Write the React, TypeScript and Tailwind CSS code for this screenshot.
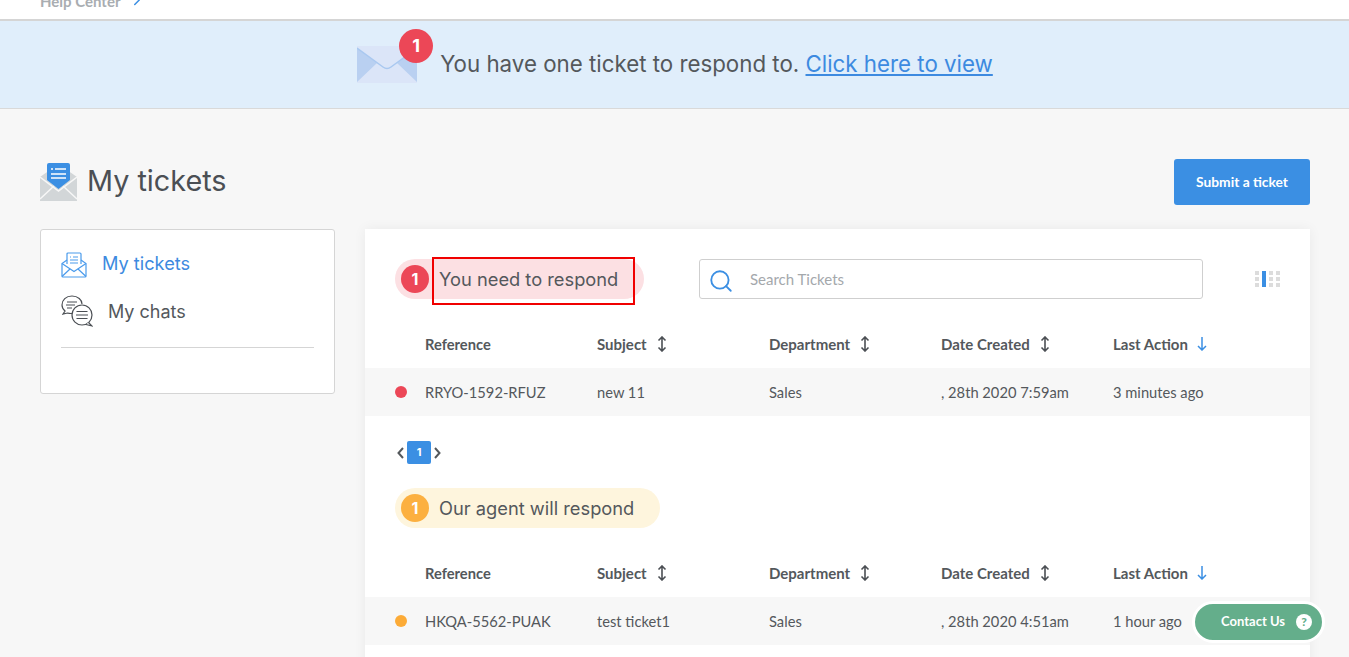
import { ChevronRight, Search } from "lucide-react";

const columns = ["Subject", "Department", "Date Created"];

function SortArrows() {
  return (
    <svg width="10" height="16" viewBox="0 0 10 16" fill="none" stroke="#4b4f54" strokeWidth="1.6">
      <path d="M5 1v14M1.500 4.500L5 1l3.500 3.500M1.500 11.500L5 15l3.500-3.500" />
    </svg>
  );
}

function SortDown() {
  return (
    <svg width="10" height="14" viewBox="0 0 10 14" fill="none" stroke="#3b8fe3" strokeWidth="1.500">
      <path d="M5 0v13M1 9l4 4 4-4" />
    </svg>
  );
}

function PageChevron({ dir }: { dir: "left" | "right" }) {
  return (
    <svg width="7" height="12" viewBox="0 0 7 12" fill="none" stroke="#54585c" strokeWidth="2">
      <path d={dir === "left" ? "M6 1L1.500 6 6 11" : "M1 1l4.500 5L1 11"} />
    </svg>
  );
}

function EnvelopeLight() {
  return (
    <svg width="60" height="37" viewBox="0 0 60 37" className="absolute left-0 top-0">
      <rect width="60" height="37" fill="#dbe5f8" />
      <path d="M0 2l20 15L0 36zM60 2L40 17l20 19z" fill="#b9d0f1" />
      <path d="M0 2l26 19q4 3 8 0L60 2" fill="none" stroke="#a9c8f0" strokeWidth="1.500" />
    </svg>
  );
}

function TitleIcon() {
  return (
    <svg width="37" height="38" viewBox="0 0 37 38">
      <path d="M0 14l18.500-13L37 14v24H0z" fill="#d2d6d8" />
      <path d="M0 36l14-13M37 36L23 23M0 14l18.500 14L37 14" stroke="#f7f7f7" strokeWidth="1.500" fill="none" />
      <path d="M7 2q0-2 2-2h19q2 0 2 2v15l-11.500 9L7 17z" fill="#3b8fe3" />
      <path d="M11 6h2M15 6h11M11 11h15M11 15h15" stroke="#fff" strokeWidth="1.300" />
    </svg>
  );
}

function NavTicketIcon() {
  return (
    <svg width="26" height="26" viewBox="0 0 26 26" fill="none" stroke="#4a9bec" strokeWidth="1.200">
      <path d="M6 12V2q0-1 1-1h12q1 0 1 1v10" />
      <path d="M9 5h1M12 5h5M9 8h8M9 11h8" />
      <path d="M6 8l-5 3.500V24q0 1 1 1h22q1 0 1-1V11.500L20 8" />
      <path d="M1 11.500l12 8 12-8M1 24.500l8.500-8M25 24.500l-8.500-8" />
    </svg>
  );
}

function NavChatIcon() {
  return (
    <svg width="32" height="32" viewBox="0 0 32 32" fill="none" stroke="#4b4f54" strokeWidth="1.200">
      <path d="M11 18.500H10q-2 0-3.500-.5L2 19l2-3Q1 13.500 1 10c0-5 4-9 10-9s10 4 10 8" />
      <path d="M6 7h10M5 10h9M6 13h5" />
      <circle cx="21" cy="20" r="10" fill="#fff" />
      <path d="M27.500 27.500L31 31l-6-1.500" fill="#fff" />
      <path d="M15.500 16.500h11M15 20h12M15.500 23.500h11" />
    </svg>
  );
}

function LayoutIcon() {
  const cell = "bg-[#dcdcdc]";
  return (
    <div className="grid h-4 w-[25px] grid-cols-4 grid-rows-3 gap-x-[3px] gap-y-[2px]">
      <span className={cell} />
      <span className="row-span-3 bg-[#3b8fe3]" />
      <span className={cell} />
      <span className={cell} />
      <span className={cell} />
      <span className={cell} />
      <span className={cell} />
      <span className={cell} />
      <span className={cell} />
      <span className={cell} />
    </div>
  );
}

function TableBlock({ dot, reference, subject, created, last }: { dot: string; reference: string; subject: string; created: string; last: string }) {
  return (
    <div className="font-['Lato',sans-serif] text-[#54585c]">
      <div className="grid h-[48px] grid-cols-[232px_172px_172px_172px_1fr] items-center text-[15px] font-bold">
        <span className="pl-[60px] text-[14.700px]">Reference</span>
        {columns.map((col) => (
          <span key={col} className="flex items-center gap-[10px]">
            {col}
            <SortArrows />
          </span>
        ))}
        <span className="flex items-center gap-[9px]">
          Last Action
          <SortDown />
        </span>
      </div>
      <div className="grid h-[48px] grid-cols-[232px_172px_172px_172px_1fr] items-center bg-[#f7f7f7] pt-[1px] text-[14.700px]">
        <span className="flex items-center pl-[30px]">
          <span className={`h-3 w-3 rounded-full ${dot}`} />
          <span className="ml-[18px]">{reference}</span>
        </span>
        <span>{subject}</span>
        <span>Sales</span>
        <span>{created}</span>
        <span>{last}</span>
      </div>
    </div>
  );
}

export default function App() {
  return (
    <div className="relative h-[657px] overflow-hidden bg-[#f7f7f7] font-['Inter',sans-serif]">
      <div className="flex h-[21px] items-end overflow-hidden border-b-2 border-[#d5d5d5] bg-white pb-[10px] pl-10 font-['Lato',sans-serif] text-[15px] font-bold text-[#a9adb1]">
        <span className="leading-none">Help Center</span>
        <ChevronRight size={18} className="ml-2 text-[#3b8fe3]" />
      </div>

      <div className="flex h-[88px] items-center justify-center border-b border-[#d9d9d9] bg-[#e0eefb] pl-[1px]">
        <div className="relative mr-[23px] h-[37px] w-[60px]">
          <EnvelopeLight />
          <span className="absolute left-[42px] top-[-17px] flex h-[34px] w-[34px] items-center justify-center rounded-full bg-[#ec4757] text-lg font-bold text-white">
            1
          </span>
        </div>
        <p className="mb-[2px] text-[22.300px] text-[#54585c]">
          You have one ticket to respond to.{" "}
          <span className="text-[#3d8ae0] underline">Click here to view</span>
        </p>
      </div>

      <div className="mt-[50px] flex h-[46px] items-center justify-between pl-10 pr-[39px]">
        <div className="flex items-center gap-[10px]">
          <TitleIcon />
          <h1 className="mb-[2px] text-[28.800px] text-[#4b4f54]">My tickets</h1>
        </div>
        <button className="h-[46px] w-[136px] rounded-[3px] bg-[#3b8fe3] font-['Lato',sans-serif] text-[13.800px] font-bold text-white">
          Submit a ticket
        </button>
      </div>

      <div className="mt-6 flex items-start gap-[30px] pl-10 pr-[39px]">
        <aside className="h-[165px] w-[295px] rounded-[3px] border border-[#d5d5d5] bg-white px-5 pt-5">
          <div className="flex items-center gap-[15px] text-[18.200px] text-[#3d8ae0]">
            <NavTicketIcon />
            <span className="mb-[2px]">My tickets</span>
          </div>
          <div className="mt-4 flex items-center gap-[15px] text-[18px] text-[#54585c]">
            <NavChatIcon />
            <span>My chats</span>
          </div>
          <div className="mt-5 border-t border-[#d5d5d5]" />
        </aside>

        <main className="h-[500px] flex-1 bg-white shadow-[0_0_12px_rgba(0,0,0,0.06)]">
          <div className="flex items-center pl-[30px] pt-[30px]">
            <div className="relative flex h-10 w-[249px] items-center rounded-full bg-[#fce0e3] pl-[6px] text-[18.300px] text-[#54585c]">
              <span className="flex h-7 w-7 items-center justify-center rounded-full bg-[#ec4757] text-base font-bold text-white">1</span>
              <span className="ml-[10px] mt-[2px]">You need to respond</span>
              <span className="absolute left-[37px] top-[-2px] h-[48px] w-[203px] border-2 border-[#f00000]" />
            </div>
            <div className="ml-[55px] flex h-10 w-[504px] items-center rounded-[3px] border border-[#cfcfcf] bg-white pl-[8px] font-['Lato',sans-serif] text-[15px] text-[#a4a8ac]">
              <Search size={26} strokeWidth={1.700} className="mt-[3px] text-[#3b8fe3]" />
              <span className="ml-[16px]">Search Tickets</span>
            </div>
            <div className="ml-[52px]">
              <LayoutIcon />
            </div>
          </div>

          <div className="mt-[21px]">
            <TableBlock dot="bg-[#ec4757]" reference="RRYO-1592-RFUZ" subject="new 11" created=", 28th 2020 7:59am" last="3 minutes ago" />
          </div>

          <div className="flex items-center pl-[32px] pt-[25px]">
            <PageChevron dir="left" />
            <span className="ml-[3px] mr-[3px] flex h-[23px] w-6 items-center justify-center rounded-[2px] bg-[#3b8fe3] text-[11px] font-bold text-white">1</span>
            <PageChevron dir="right" />
          </div>

          <div className="mx-[30px] mt-6 flex h-10 w-[265px] items-center rounded-full bg-[#fef5dd] pl-[6px] text-[18.300px] text-[#54585c]">
            <span className="flex h-7 w-7 items-center justify-center rounded-full bg-[#fcb040] text-base font-bold text-white">1</span>
            <span className="ml-[10px] mt-[2px]">Our agent will respond</span>
          </div>

          <div className="mt-[21px]">
            <TableBlock dot="bg-[#fcab37]" reference="HKQA-5562-PUAK" subject="test ticket1" created=", 28th 2020 4:51am" last="1 hour ago" />
          </div>
        </main>
      </div>

      <div className="absolute left-[1192px] top-[601px] flex h-[42px] w-[133px] items-center justify-end rounded-full border-[3px] border-white bg-[#64ae8b] pr-[10px] font-['Lato',sans-serif] text-[13px] font-bold text-white">
        Contact Us
        <span className="ml-[11px] flex h-4 w-4 items-center justify-center rounded-full bg-white text-[12px] font-black text-[#64ae8b]">?</span>
      </div>
    </div>
  );
}
